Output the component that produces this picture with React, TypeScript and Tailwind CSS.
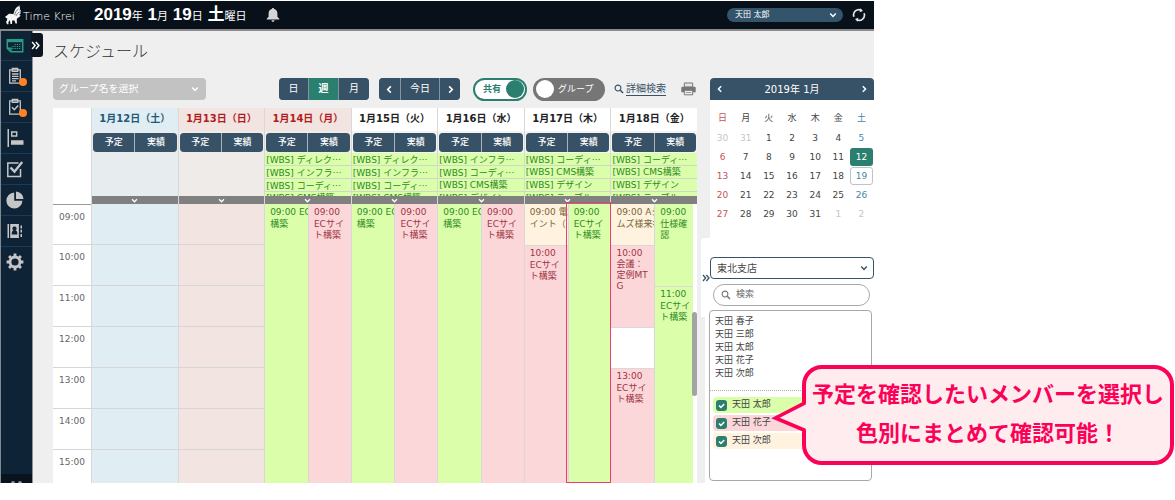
import React from 'react';

type Tone = 'green' | 'pink' | 'cream' | 'empty';

interface ScheduleEvent {
  time?: string;
  lines?: string[];
  tone: Tone;
  size: 'one' | 'two' | 'rest';
  tight?: boolean;
}

interface Day {
  label: string;
  kind: 'sat' | 'sun' | 'holiday' | 'week';
  tasks: string[];
  plan: ScheduleEvent[];
  actual: ScheduleEvent[];
  selected?: boolean;
}

const toneClass: Record<Tone, string> = {
  green: 'bg-[#dbfeab] text-[#2e8b22]',
  pink: 'bg-[#fcd7d9] text-[#a03444]',
  cream: 'bg-[#fff3e0] text-[#7a6334]',
  empty: 'bg-white',
};

const sizeClass = {
  one: 'h-[41px]',
  two: 'h-[82px]',
  rest: 'flex-1',
};

const planEc: ScheduleEvent[] = [{ time: '09:00 EC', lines: ['構築'], tone: 'green', size: 'rest' }];
const actualEc: ScheduleEvent[] = [{ time: '09:00', lines: ['ECサイ', 'ト構築'], tone: 'pink', size: 'rest' }];

const days: Day[] = [
  { label: '1月12日（土）', kind: 'sat', tasks: [], plan: [], actual: [] },
  { label: '1月13日（日）', kind: 'sun', tasks: [], plan: [], actual: [] },
  {
    label: '1月14日（月）',
    kind: 'holiday',
    tasks: ['ディレク…', 'インフラ…', 'コーディ…', 'CMS構築'],
    plan: planEc,
    actual: actualEc,
  },
  {
    label: '1月15日（火）',
    kind: 'week',
    tasks: ['ディレク…', 'インフラ…', 'コーディ…', 'CMS構築'],
    plan: planEc,
    actual: actualEc,
  },
  {
    label: '1月16日（水）',
    kind: 'week',
    tasks: ['インフラ…', 'コーディ…', 'CMS構築', 'デザイン'],
    plan: planEc,
    actual: actualEc,
  },
  {
    label: '1月17日（木）',
    kind: 'week',
    tasks: ['コーディ…', 'CMS構築', 'デザイン', 'テーブル'],
    plan: [
      { time: '09:00 電', lines: ['イント（'], tone: 'cream', size: 'one' },
      { time: '10:00', lines: ['ECサイ', 'ト構築'], tone: 'pink', size: 'rest' },
    ],
    actual: [{ time: '09:00', lines: ['ECサイ', 'ト構築'], tone: 'green', size: 'rest' }],
    selected: true,
  },
  {
    label: '1月18日（金）',
    kind: 'week',
    tasks: ['コーディ…', 'CMS構築', 'デザイン', 'テーブル'],
    plan: [
      { time: '09:00 Aジ', lines: ['ムズ様来社'], tone: 'cream', size: 'one' },
      { time: '10:00', lines: ['会議：', '定例MT', 'G'], tone: 'pink', size: 'two', tight: true },
      { tone: 'empty', size: 'one' },
      { time: '13:00', lines: ['ECサイ', 'ト構築'], tone: 'pink', size: 'rest' },
    ],
    actual: [
      { time: '09:00', lines: ['仕様確', '認'], tone: 'green', size: 'two' },
      { time: '11:00', lines: ['ECサイ', 'ト構築'], tone: 'green', size: 'rest' },
    ],
  },
];

const hours = ['09:00', '10:00', '11:00', '12:00', '13:00', '14:00', '15:00'];

const titleClass = {
  sat: 'bg-[#e0edf2] text-[#1f5a7a]',
  sun: 'bg-[#f2e4e1] text-[#b01c1c]',
  holiday: 'bg-[#f2e4e1] text-[#b01c1c]',
  week: 'bg-white text-[#222222]',
};

const headClass = {
  sat: 'bg-[#e7ecef]',
  sun: 'bg-[#efebe9]',
  holiday: 'bg-[#efebe9]',
  week: 'bg-[#f3f3f3]',
};

const bodyClass = {
  sat: 'bg-[#e0edf2]',
  sun: 'bg-[#f2e4e1]',
  holiday: 'bg-[#f2e4e1]',
  week: 'bg-white',
};

function Chevron({ dir, className }: { dir: 'left' | 'right' | 'down'; className: string }) {
  const d = { left: 'M6.5 1.5 3 5l3.5 3.5', right: 'M3.5 1.5 7 5 3.5 8.5', down: 'M1.5 3.2 5 6.8l3.5-3.6' }[dir];
  return (
    <svg viewBox="0 0 10 10" className={className} fill="none" stroke="currentColor" strokeWidth="1.8" aria-hidden="true">
      <path d={d} />
    </svg>
  );
}

function DoubleChevron({ className }: { className: string }) {
  return (
    <svg viewBox="0 0 10 10" className={className} fill="none" stroke="currentColor" strokeWidth="1.6" aria-hidden="true">
      <path d="M1.2 1.2 4.6 5 1.2 8.8M5.4 1.2 8.8 5 5.4 8.8" />
    </svg>
  );
}

function Magnifier({ className }: { className: string }) {
  return (
    <svg viewBox="0 0 12 12" className={className} fill="none" stroke="currentColor" aria-hidden="true">
      <circle cx="4.8" cy="4.8" r="3.5" strokeWidth="1.3" />
      <path d="m7.5 7.5 3.4 3.4" strokeWidth="1.8" />
    </svg>
  );
}

function Logo() {
  return (
    <svg viewBox="0 0 18 20" className="h-5 w-[18px]" fill="#f6f6f6" aria-hidden="true">
      <path d="M15.800.6C12.600 1 9.800 3.500 9 7.400l-.9 1.800C6 8.300 3.300 8.600 2.300 10.200L.3 11.600l.5 1.300 1.400.3-.2 2.400-1 1.200 1 2.500h1.600l-.2-2.300 1.500-1.800.6 3.700h1.500l.2-3.400 2.300.1 1 3h1.500l-.3-3.900.8-1.800c1.500-.5 2.600-1.500 3.100-3l-1.800.3c1-.6 1.800-1.500 2.300-2.700l-1.700.3c.9-.7 1.500-1.700 1.700-2.900l-1.500.6c.7-1.300.7-3.300-.8-4.900Z" />
      <path d="M9.700 10.200c.4-2.600 1.800-4.900 3.900-6.500M11 11c.6-1.700 1.700-3 3.200-4" fill="none" stroke="#08111a" strokeWidth=".5" />
    </svg>
  );
}

function TopBar() {
  return (
    <header className="flex h-[30px] items-center border-b-2 border-[#8b898b] bg-[#08111a] pr-2 pl-[5px] text-white">
      <a href="#home" className="flex items-center">
        <Logo />
        <span className="w-14 pt-1 font-['DejaVu_Sans',sans-serif] text-[11px] leading-4 font-extralight whitespace-nowrap text-white">
          Time Krei
        </span>
      </a>
      <p className="ml-[15px] font-['Liberation_Sans','Noto_Sans_CJK_JP',sans-serif] text-[17px] leading-7 font-bold whitespace-nowrap">
        2019<span className="text-[11px] font-normal">年</span> 1<span className="text-[11px] font-normal">月</span> 19
        <span className="text-[11px] font-normal">日</span> 土<span className="text-[11px] font-normal">曜日</span>
      </p>
      <button type="button" aria-label="通知" className="ml-5">
        <svg viewBox="0 0 14 14" className="size-3.5" fill="#d6d6d6">
          <path d="M7 0c.7 0 1.100.5 1.100 1.100 2 .5 3.300 2.100 3.300 4.300v3.300l1.900 2v.8H.7v-.8l1.900-2V5.400c0-2.200 1.300-3.800 3.300-4.300C5.900.5 6.300 0 7 0ZM5.500 12.200h3C8.400 13.200 7.800 13.800 7 13.800s-1.400-.6-1.500-1.600Z" />
        </svg>
      </button>
      <div className="relative ml-auto w-[116px]">
        <select
          aria-label="ユーザー"
          className="block h-3.5 w-full appearance-none rounded-full bg-[#34546b] pl-2 text-[8px] leading-[14px] text-white"
        >
          <option>天田 太郎</option>
        </select>
        <Chevron dir="down" className="pointer-events-none absolute top-[3px] right-1.5 size-2" />
      </div>
      <button type="button" aria-label="更新" className="ml-[9px]">
        <svg viewBox="0 0 14 14" className="size-3.5" fill="none" stroke="#e4e4e4" strokeWidth="1.7">
          <path d="M1.900 8.700A5.300 5.300 0 0 1 9.300 2.200M12.100 5.300A5.300 5.300 0 0 1 4.700 11.800" />
          <path d="M8.300.3 11 3.100 7.600 4.300ZM5.700 13.700 3 10.900l3.400-1.200Z" fill="#e4e4e4" stroke="none" />
        </svg>
      </button>
    </header>
  );
}

const navItems: { name: string; badge?: boolean; icon: React.ReactNode }[] = [
  {
    name: 'スケジュール',
    icon: (
      <g fill="none" stroke="#2a9d84" strokeWidth="1.5">
        <path d="M1.300 2.800h15.400v12H4.900l-3.600-3.400Z" />
        <path d="M1.300 4h15.400" strokeWidth="2.400" />
        <path d="M1.400 11.200h3.600v3.600" strokeWidth="1.400" />
        <path d="M8.500 7.500h6.300M6.200 9.500h8.600M6.200 11.500h8.600" strokeDasharray="1.300 1" strokeWidth="1.200" />
      </g>
    ),
  },
  {
    name: '日報',
    badge: true,
    icon: (
      <g fill="none" stroke="#c6c6c6" strokeWidth="1.300">
        <path d="M3.700 2.800h10.600v13.400H3.700Z" />
        <path d="M6.300 1.500h5.400v2.800H6.300ZM6 7h6.500M6 9.300h6.500M6 11.600h6.500M6 13.800h4" />
      </g>
    ),
  },
  {
    name: '承認',
    badge: true,
    icon: (
      <g fill="none" stroke="#c6c6c6" strokeWidth="1.300">
        <path d="M3.700 2.800h10.600v13.400H3.700Z" />
        <path d="M6.300 1.500h5.400v2.800H6.300Z" />
        <path d="m6 9.300 2.300 2.400 3.900-4.200" strokeWidth="1.600" />
      </g>
    ),
  },
  {
    name: 'プロジェクト',
    icon: (
      <g fill="#c6c6c6">
        <path d="M1.500 0H3v18H1.500ZM5 11.300h12.500v4.400H5Z" />
        <path d="M5.700 3h5v4h-5Z" fill="none" stroke="#c6c6c6" strokeWidth="1.400" />
      </g>
    ),
  },
  {
    name: 'タスク',
    icon: (
      <g fill="none" stroke="#c6c6c6">
        <path d="M12.500 3H1.800v13.500h12.700V9" strokeWidth="1.500" />
        <path d="m4.500 7.500 4 4.200L16.200 2" strokeWidth="2.400" />
      </g>
    ),
  },
  {
    name: '集計',
    icon: (
      <g fill="#c6c6c6">
        <path d="M8.200 1.600v8.200h8.200A8 8 0 1 1 8.200 1.600Z" />
        <path d="M10 .5a8 8 0 0 1 7.500 7.600H10Z" />
      </g>
    ),
  },
  {
    name: '連絡先',
    icon: (
      <g fill="#c6c6c6">
        <path d="M1.500 2H3v14H1.500ZM14.500 3.500H16v3h-1.500ZM14.500 7.800H16v2.700h-1.500ZM14.500 12H16v3h-1.500Z" />
        <path fillRule="evenodd" d="M4.200 2h8.700v14H4.200ZM8.500 4.500a2 2 0 0 0-1 3.800c-1.200.4-1.800 1.800-1.800 4.200h5.700c0-2.400-.6-3.800-1.900-4.200a2 2 0 0 0-1-3.800Z" />
      </g>
    ),
  },
  {
    name: '設定',
    icon: (
      <g fill="none" stroke="#c6c6c6">
        <circle cx="9" cy="9" r="5" strokeWidth="2.800" />
        <path
          d="M9 .6v3M9 14.400v3M.6 9h3M14.400 9h3M3.060 3.060l2.100 2.100M12.840 12.840l2.100 2.100M3.060 14.940l2.100-2.100M12.840 5.160l2.100-2.100"
          strokeWidth="2.800"
        />
      </g>
    ),
  },
];

function Sidebar() {
  return (
    <nav className="relative flex w-[33px] shrink-0 flex-col border-r border-l border-l-[#7f8a93] border-r-[#8c9299] bg-[#0e2336]">
      <ul>
        {navItems.map((item) => (
          <li key={item.name} className="group">
            <a
              href="#menu"
              aria-label={item.name}
              className="relative flex h-[31px] items-center justify-center border-b border-[#1c3a55] pr-1 group-first:h-[30px] group-last:border-transparent"
            >
              <svg viewBox="0 0 18 18" className="size-[18px]" aria-hidden="true">
                {item.icon}
              </svg>
              {item.badge && <span className="absolute top-[17px] right-[5px] size-2 rounded-full bg-[#ff8324]" />}
            </a>
          </li>
        ))}
      </ul>
      <div className="mt-auto flex h-[9px] items-end justify-center gap-[3px] bg-[#09131d]">
        <span className="h-0.5 w-1 rounded-t bg-[#8d949a]" />
        <span className="h-0.5 w-1 rounded-t bg-[#8d949a]" />
      </div>
      <button
        type="button"
        aria-label="メニューを開く"
        className="absolute top-0.5 -right-[11px] flex h-6 w-3 items-center justify-center rounded-r-[3px] bg-[#0b1620] pr-1 text-white"
      >
        <DoubleChevron className="size-[9px] shrink-0" />
      </button>
    </nav>
  );
}

function Toolbar() {
  return (
    <div className="flex h-[22px] items-center pr-px text-[10px] leading-none whitespace-nowrap text-white">
      <div className="relative w-[153px]">
        <select
          aria-label="グループ名"
          className="block h-[22px] w-full appearance-none rounded bg-[#c2c2c2] pl-1.5 text-[10px] text-white"
        >
          <option>グループ名を選択</option>
        </select>
        <Chevron dir="down" className="pointer-events-none absolute top-[7px] right-[7px] size-2" />
      </div>
      <div className="ml-auto flex h-full gap-px overflow-hidden rounded bg-[#8795a0]">
        <button type="button" className="w-[29px] bg-[#375267]">日</button>
        <button type="button" aria-pressed="true" className="w-[29px] bg-[#2a7f6e] font-bold">週</button>
        <button type="button" className="w-[30px] bg-[#375267]">月</button>
      </div>
      <div className="ml-2.5 flex h-full gap-px overflow-hidden rounded bg-[#8795a0]">
        <button type="button" aria-label="前の週" className="flex w-[21px] items-center justify-center bg-[#375267]">
          <Chevron dir="left" className="size-[9px]" />
        </button>
        <button type="button" className="w-[38px] bg-[#375267]">今日</button>
        <button type="button" aria-label="次の週" className="flex w-5 items-center justify-center bg-[#375267]">
          <Chevron dir="right" className="size-[9px]" />
        </button>
      </div>
      <button
        type="button"
        role="switch"
        aria-checked="true"
        className="ml-[13px] flex h-[23px] w-[54px] items-center justify-between rounded-full border-2 border-[#2a7f6e] bg-white pr-px pl-2 text-[9px] font-bold text-[#2a7f6e]"
      >
        共有
        <span className="size-[18px] rounded-full bg-[#2a7f6e]" />
      </button>
      <button
        type="button"
        role="switch"
        aria-checked="false"
        className="ml-1.5 flex h-[23px] w-[72px] items-center gap-1 rounded-full bg-[#767676] pl-[3px] text-[9px]"
      >
        <span className="size-[18px] rounded-full bg-white" />
        グループ
      </button>
      <a href="#search" className="ml-[9px] flex items-center gap-0.5 text-[#375267]">
        <Magnifier className="size-2.5" />
        <span className="border-b border-[#375267] leading-3">詳細検索</span>
      </a>
      <button type="button" aria-label="印刷" className="ml-[15px]">
        <svg viewBox="0 0 15 14" className="h-3.5 w-[15px]">
          <path d="M3.300 1h8.400v4H3.300Z" fill="#e6e6e6" stroke="#777" />
          <path d="M1.500 4.800h12c.8 0 1.200.4 1.200 1.200v4.200H.3V6c0-.8.4-1.200 1.200-1.200Z" fill="#777" />
          <path d="M3.300 8.300h8.400v4.500H3.300Z" fill="#efefef" stroke="#777" />
          <path d="M4.800 10.500h5.400" stroke="#999" />
        </svg>
      </button>
    </div>
  );
}

function TaskLabel({ text }: { text: string }) {
  const cut = text.endsWith('…');
  return (
    <li className="h-[13px] overflow-hidden border-b border-[#cfd8c4] pl-px leading-[13px] whitespace-nowrap">
      [WBS] {cut ? text.slice(0, -1) : text}
      {cut && <span className="font-['Noto_Sans_CJK_JP',sans-serif]">…</span>}
    </li>
  );
}

function DayHead({ day }: { day: Day }) {
  return (
    <div className={`flex min-w-0 flex-col border-l border-[#d8d8d8] ${headClass[day.kind]}`}>
      <h2 className={`h-[23px] text-center text-[10px] leading-[22px] font-bold whitespace-nowrap ${titleClass[day.kind]}`}>
        {day.label}
      </h2>
      <div className="mx-px mt-0.5 mb-px grid h-[19px] grid-cols-2 gap-px overflow-hidden rounded bg-[#a9b5bd] text-[9px] font-medium text-white">
        <button type="button" className="bg-[#375267]">予定</button>
        <button type="button" className="bg-[#375267]">実績</button>
      </div>
      <ul className={`h-[43px] overflow-hidden text-[9px] text-[#2e8b22] ${day.tasks.length ? 'bg-[#dbfeab]' : ''}`}>
        {day.tasks.map((t) => (
          <TaskLabel key={t} text={t} />
        ))}
      </ul>
      <button type="button" aria-label="タスクを展開" className="flex h-2 items-center justify-center bg-[#808080] text-white">
        <Chevron dir="down" className="size-[7px]" />
      </button>
    </div>
  );
}

function EventColumn({ events }: { events: ScheduleEvent[] }) {
  return (
    <div className="flex h-full min-w-0 flex-col overflow-hidden">
      {events.map((e, i) => (
        <div
          key={i}
          className={`overflow-hidden border-t border-[#dcd8d8] pt-px pl-[5px] text-[9px] leading-[11px] whitespace-nowrap first:border-transparent ${toneClass[e.tone]} ${sizeClass[e.size]}`}
        >
          {e.time && <p className={e.tight ? 'pt-px' : 'h-[13px] pt-px'}>{e.time}</p>}
          {e.lines?.map((l) => (
            <p key={l}>{l}</p>
          ))}
        </div>
      ))}
    </div>
  );
}

function DayBody({ day, last }: { day: Day; last: boolean }) {
  if (!day.plan.length) {
    return (
      <div className={`border-l border-[#d8d8d8] ${bodyClass[day.kind]}`}>
        {hours.map((h) => (
          <div key={h} className="h-[41px] border-b border-[#d6d6d8] last:h-[33px] last:border-b-0" />
        ))}
      </div>
    );
  }
  return (
    <div className="relative grid min-w-0 grid-cols-2 border-l border-[#d8d8d8] bg-white">
      <EventColumn events={day.plan} />
      <div className={`relative min-w-0 border-l border-[#d8d8d8] ${last ? 'mr-1' : ''}`}>
        <EventColumn events={day.actual} />
        {day.selected && <span className="absolute -top-0.5 -right-px bottom-0 -left-[3px] z-10 border border-[#f03a72]" />}
      </div>
      {last && <span className="absolute top-[108px] right-0 h-[84px] w-[5px] rounded-full bg-[#a3a3a3]" />}
    </div>
  );
}

function Schedule() {
  return (
    <main className="flex min-w-0 flex-1 flex-col bg-[#efefef] pr-1 pl-5">
      <h1 className="mt-2.5 h-[37px] text-[16px] leading-[22px] font-light text-[#333333]">スケジュール</h1>
      <Toolbar />
      <section aria-label="週間スケジュール" className="mt-2">
        <div className="grid grid-cols-[38px_repeat(7,minmax(0,1fr))]">
          <div className="bg-white" />
          {days.map((d) => (
            <DayHead key={d.label} day={d} />
          ))}
        </div>
        <div className="grid grid-cols-[38px_repeat(7,minmax(0,1fr))]">
          <div className="border-t border-[#9a9a9a] bg-white text-center text-[9px] text-[#666666]">
            {hours.map((h) => (
              <div key={h} className="h-[41px] overflow-hidden border-b border-[#d6d6d6] pt-1 leading-4 first:h-10 last:h-[33px] last:border-b-0">
                {h}
              </div>
            ))}
          </div>
          {days.map((d, i) => (
            <DayBody key={d.label} day={d} last={i === days.length - 1} />
          ))}
        </div>
      </section>
    </main>
  );
}

const weekdays = ['日', '月', '火', '水', '木', '金', '土'];
const weeks = [
  [30, 31, 1, 2, 3, 4, 5],
  [6, 7, 8, 9, 10, 11, 12],
  [13, 14, 15, 16, 17, 18, 19],
  [20, 21, 22, 23, 24, 25, 26],
  [27, 28, 29, 30, 31, 1, 2],
];

function dayColor(week: number, col: number, n: number) {
  if ((week === 0 && n > 20) || (week === 4 && n < 20)) return 'text-[#c3c6c9]';
  if (col === 0) return 'text-[#c65454]';
  if (col === 6) return 'text-[#4a86a8]';
  return 'text-[#444444]';
}

function dayMark(week: number, col: number) {
  if (week === 1 && col === 6) return 'rounded-[3px] bg-[#2a7f6e] leading-[18px] text-white';
  if (week === 2 && col === 6) return 'rounded-[3px] border border-[#bcc3ca] leading-4';
  return 'leading-[18px]';
}

function MiniCalendar() {
  return (
    <section aria-label="カレンダー" className="ml-[9px] h-[160px] bg-white">
      <div className="flex h-[22px] items-center justify-between rounded-t bg-[#375267] px-1.5 text-[10px] text-white">
        <button type="button" aria-label="前の月">
          <Chevron dir="left" className="size-2" />
        </button>
        <span>2019年 1月</span>
        <button type="button" aria-label="次の月">
          <Chevron dir="right" className="size-2" />
        </button>
      </div>
      <table className="mt-2 ml-px w-[calc(100%-2px)] table-fixed text-center text-[9px]">
        <thead>
          <tr>
            {weekdays.map((w, i) => (
              <th key={w} className={`h-5 p-0 leading-4 font-normal ${dayColor(2, i, 15)}`}>
                {w}
              </th>
            ))}
          </tr>
        </thead>
        <tbody>
          {weeks.map((row, r) => (
            <tr key={r}>
              {row.map((n, c) => (
                <td key={c} className={`h-[19px] p-0 ${dayColor(r, c, n)}`}>
                  <span className={`block h-[18px] ${dayMark(r, c)}`}>{n}</span>
                </td>
              ))}
            </tr>
          ))}
        </tbody>
      </table>
    </section>
  );
}

const members = ['天田 春子', '天田 三郎', '天田 太郎', '天田 花子', '天田 次郎'];
const chosen = [
  { name: '天田 太郎', tone: 'bg-[#dbfeab]' },
  { name: '天田 花子', tone: 'bg-[#fcd7d9]' },
  { name: '天田 次郎', tone: 'bg-[#fff3e0]' },
];

function MemberPanel() {
  return (
    <section aria-label="メンバー" className="relative flex flex-1 flex-col rounded-tl bg-white pt-[19px] pr-0.5 pb-0.5 pl-2">
      <span className="absolute top-[79px] bottom-0 left-0 w-1 bg-[#efefef]" />
      <button type="button" aria-label="パネルを閉じる" className="absolute top-9 left-px text-[#375267]">
        <DoubleChevron className="size-2" />
      </button>
      <div className="relative -mr-0.5 ml-px">
        <select
          aria-label="部署"
          className="block h-[22px] w-full appearance-none rounded-sm border border-[#375267] bg-white pl-1.5 text-[10px] text-[#444444]"
        >
          <option>東北支店</option>
        </select>
        <Chevron dir="down" className="pointer-events-none absolute top-[7px] right-1.5 size-2 text-[#375267]" />
      </div>
      <label className="mt-[5px] mr-0.5 ml-1 flex h-[22px] items-center gap-[5px] rounded-full border border-[#aaaaaa] pl-[7px] text-[#777777]">
        <Magnifier className="size-2.5 shrink-0" />
        <input
          type="search"
          aria-label="検索"
          placeholder="検索"
          className="w-full min-w-0 bg-transparent text-[9px] outline-none placeholder:text-[#666666]"
        />
      </label>
      <div className="mt-1 flex-1 rounded border border-[#a8a8a8] text-[9px] text-[#444444]">
        <ul className="pt-1 pb-2.5 pl-[5px] leading-[13px]">
          {members.map((m) => (
            <li key={m}>{m}</li>
          ))}
        </ul>
        <div className="border-t border-dotted border-[#b0b0b0]" />
        <div className="mt-1.5 flex flex-col gap-0.5 px-[3px]">
          {chosen.map((m) => (
            <label key={m.name} className={`relative flex h-4 items-center gap-[5px] rounded-sm pl-[3px] ${m.tone}`}>
              <input type="checkbox" defaultChecked className="size-[11px] appearance-none rounded-[3px] bg-[#2a7f6e]" />
              <svg viewBox="0 0 11 11" className="pointer-events-none absolute left-[3px] size-[11px]" fill="none" stroke="#fff" strokeWidth="1.500">
                <path d="m3 5.500 1.900 1.900L8.200 4" />
              </svg>
              {m.name}
            </label>
          ))}
        </div>
      </div>
    </section>
  );
}

function Callout() {
  return (
    <div className="absolute top-[365px] right-px z-20 w-[372px] rounded-[20px] border-4 border-[#fb0259] bg-[#ffecef] pt-1 pb-2.5 text-center font-['Noto_Sans_CJK_JP',sans-serif] text-[22px] leading-[39px] font-bold whitespace-nowrap text-[#fb0259]">
      <svg viewBox="0 0 36 40" className="absolute top-[29px] -left-9 h-10 w-9" aria-hidden="true">
        <path d="M36 5.500 33.500 4 7 20l26.500 13.500L36 32Z" fill="#ffecef" />
        <path d="M34 3.500v1.900L5.500 20 34 32v3" fill="none" stroke="#fb0259" strokeWidth="3.600" />
      </svg>
      <p>予定を確認したいメンバーを選択し</p>
      <p>色別にまとめて確認可能！</p>
    </div>
  );
}

export default function App() {
  return (
    <div
      lang="ja"
      className="relative min-h-screen bg-white pt-px pr-[301px] font-['DejaVu_Sans','Noto_Sans_CJK_JP',sans-serif]"
    >
      <TopBar />
      <div className="flex">
        <Sidebar />
        <Schedule />
        <aside className="flex w-[173px] shrink-0 flex-col bg-[#efefef] pt-[47px]">
          <MiniCalendar />
          <MemberPanel />
        </aside>
      </div>
      <Callout />
    </div>
  );
}
